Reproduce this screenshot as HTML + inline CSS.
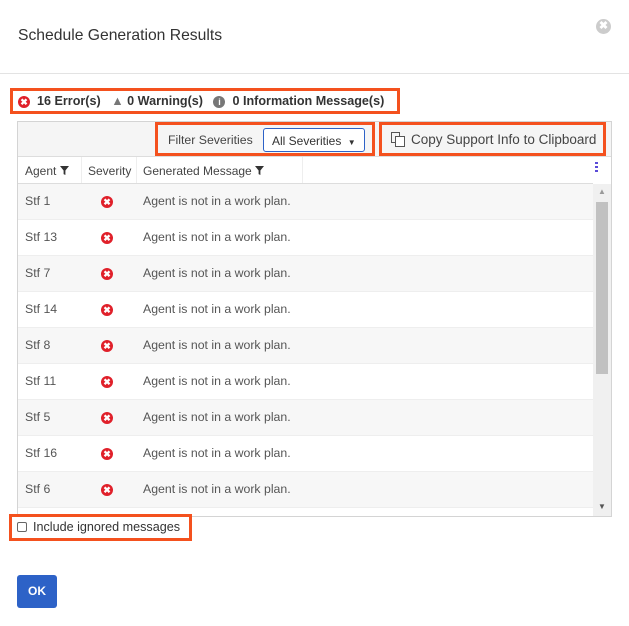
<!DOCTYPE html>
<html><head><style>
*{box-sizing:border-box;margin:0;padding:0}
body{width:629px;height:626px;background:#fff;font-family:"Liberation Sans",sans-serif;color:#444;position:relative;overflow:hidden;font-size:12px}
.abs{position:absolute}
.hdr{left:0;top:0;width:629px;height:74px;border-bottom:1px solid #e3e3e3}
.title{left:18px;top:27px;font-size:15.7px;color:#333}
.ox{display:inline-block;width:12px;height:12px;border-radius:50%;background:#e0202a;color:#fff;font-size:9px;line-height:12px;text-align:center;font-weight:bold}
.box{border:3px solid #f4511e}
.grid{left:17px;top:121px;width:595px;height:396px;border:1px solid #d4d4d4;background:#fff;overflow:hidden}
.tb{left:0;top:0;width:593px;height:35px;background:#f5f5f5;border-bottom:1px solid #ddd}
.hd{left:0;top:35px;width:575px;height:27px;background:#fff;border-bottom:1px solid #ddd;font-size:12px;color:#444}
.row{position:absolute;left:0;width:575px;height:36px;border-bottom:1px solid #eee;font-size:12.3px;color:#555}
.row span{position:absolute;top:10px}
</style></head><body>
<div class="abs hdr"></div>
<div class="abs title">Schedule Generation Results</div>
<div class="abs" style="left:596px;top:19px;width:15px;height:15px;border-radius:50%;background:#ccc;color:#fff;font-size:11px;line-height:15px;text-align:center;font-weight:bold">✖</div>

<div class="abs box" style="left:10px;top:88px;width:390px;height:26px"></div>
<div class="abs" style="left:18px;top:94px;font-size:12.6px;font-weight:bold;color:#333;white-space:nowrap">
<span class="ox">✖</span>&nbsp; 16 Error(s) &nbsp;&nbsp;<span style="color:#777">▲</span> 0 Warning(s) &nbsp;&nbsp;<span class="ox" style="background:#777">i</span>&nbsp; 0 Information Message(s)</div>

<div class="abs grid">
 <div class="abs tb"></div>
 <div class="abs" style="left:150px;top:11px;font-size:12.3px;color:#444">Filter Severities</div>
 <div class="abs" style="left:245px;top:6px;width:102px;height:24px;border:1px solid #2d62c7;border-radius:3px;background:#fff;font-size:12px;padding:5px 0 0 8px;color:#333;white-space:nowrap">All Severities <span style="font-size:8px;margin-left:3px">▼</span></div>
 <div class="abs" style="left:372px;top:9px;width:16px;height:16px">
  <svg width="16" height="16"><rect x="1.5" y="1.5" width="8" height="10" fill="none" stroke="#555"/><rect x="5.5" y="5.5" width="9" height="10" fill="#fff" stroke="#555"/></svg></div>
 <div class="abs" style="left:393px;top:10px;font-size:13.5px;color:#444;white-space:nowrap">Copy Support Info to Clipboard</div>
 <div class="abs hd">
  <span class="abs" style="left:7px;top:7px">Agent <svg width="9" height="9" viewBox="0 0 10 10"><path d="M0 0H10L6 5V10L4 9V5Z" fill="#333"/></svg></span>
  <div class="abs" style="left:63px;top:0;height:26px;border-left:1px solid #eee"></div>
  <span class="abs" style="left:70px;top:7px">Severity</span>
  <div class="abs" style="left:118px;top:0;height:26px;border-left:1px solid #eee"></div>
  <span class="abs" style="left:125px;top:7px">Generated Message <svg width="9" height="9" viewBox="0 0 10 10"><path d="M0 0H10L6 5V10L4 9V5Z" fill="#333"/></svg></span>
  <div class="abs" style="left:284px;top:0;height:26px;border-left:1px solid #eee"></div>
 </div>
 <div class="abs" style="left:577px;top:40px;width:3px;height:12px;background:repeating-linear-gradient(#5a4bd8 0 2px,transparent 2px 4px)"></div>
 <div class="abs" style="left:575px;top:62px;width:18px;height:333px;background:#f0f0f0"></div>
 <div class="abs" style="left:578px;top:80px;width:12px;height:172px;background:#c1c1c1"></div>
 <div class="abs" style="left:580px;top:65px;font-size:8px;color:#999">▲</div>
 <div class="abs" style="left:580px;top:380px;font-size:8px;color:#555">▼</div>
 <div class="abs" style="left:0;top:62px">
  <div class="row" style="top:0;background:#f7f7f7"><span style="left:7px">Stf 1</span><span class="ox" style="left:83px;top:12px">✖</span><span style="left:125px">Agent is not in a work plan.</span></div>
  <div class="row" style="top:36px"><span style="left:7px">Stf 13</span><span class="ox" style="left:83px;top:12px">✖</span><span style="left:125px">Agent is not in a work plan.</span></div>
  <div class="row" style="top:72px;background:#f7f7f7"><span style="left:7px">Stf 7</span><span class="ox" style="left:83px;top:12px">✖</span><span style="left:125px">Agent is not in a work plan.</span></div>
  <div class="row" style="top:108px"><span style="left:7px">Stf 14</span><span class="ox" style="left:83px;top:12px">✖</span><span style="left:125px">Agent is not in a work plan.</span></div>
  <div class="row" style="top:144px;background:#f7f7f7"><span style="left:7px">Stf 8</span><span class="ox" style="left:83px;top:12px">✖</span><span style="left:125px">Agent is not in a work plan.</span></div>
  <div class="row" style="top:180px"><span style="left:7px">Stf 11</span><span class="ox" style="left:83px;top:12px">✖</span><span style="left:125px">Agent is not in a work plan.</span></div>
  <div class="row" style="top:216px;background:#f7f7f7"><span style="left:7px">Stf 5</span><span class="ox" style="left:83px;top:12px">✖</span><span style="left:125px">Agent is not in a work plan.</span></div>
  <div class="row" style="top:252px"><span style="left:7px">Stf 16</span><span class="ox" style="left:83px;top:12px">✖</span><span style="left:125px">Agent is not in a work plan.</span></div>
  <div class="row" style="top:288px;background:#f7f7f7"><span style="left:7px">Stf 6</span><span class="ox" style="left:83px;top:12px">✖</span><span style="left:125px">Agent is not in a work plan.</span></div>
 </div>
</div>
<div class="abs box" style="left:155px;top:122px;width:220px;height:34px"></div>
<div class="abs box" style="left:379px;top:122px;width:227px;height:34px"></div>

<div class="abs box" style="left:9px;top:514px;width:183px;height:27px"></div>
<div class="abs" style="left:17px;top:522px;width:10px;height:10px;border:1px solid #666;border-radius:2px"></div>
<div class="abs" style="left:33px;top:520px;font-size:12.6px;color:#333">Include ignored messages</div>

<div class="abs" style="left:17px;top:575px;width:40px;height:33px;background:#2d62c7;border-radius:3px;color:#fff;font-size:12px;font-weight:bold;text-align:center;line-height:33px">OK</div>
</body></html>
